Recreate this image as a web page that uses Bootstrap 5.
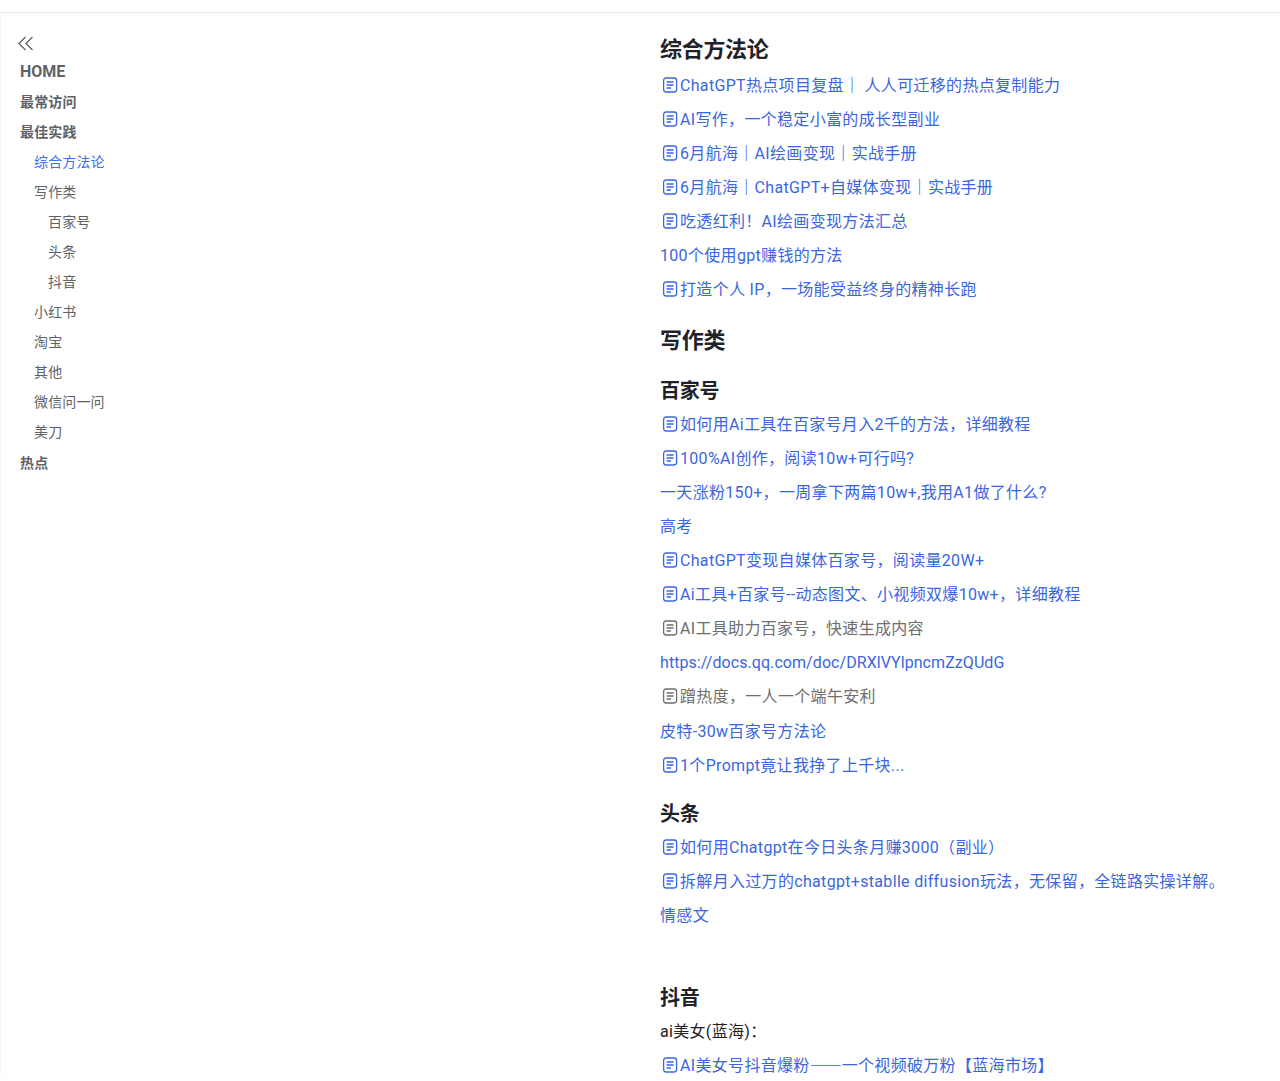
<!DOCTYPE html>
<html lang="zh-CN">

<head>
  <meta charset="UTF-8">
  <meta name="viewport" content="width=device-width, initial-scale=1.0">
  <title>最佳实践</title>
  <link href="https://cdn.jsdelivr.net/npm/bootstrap@5.3.0/dist/css/bootstrap.min.css" rel="stylesheet">
  <style>
    body {
      font-family: Roboto, "Noto Sans CJK SC", sans-serif;
      background-color: #fff;
      padding-top: 12px;
    }

    .page-shell {
      height: 1069px;
      overflow: hidden;
      border-top: 1px solid #e4e4e4;
      border-left: 1px solid #f4f4f4;
      border-bottom: 1px solid transparent;
      border-bottom-left-radius: 14px;
    }

    .side-wrap {
      width: 659px;
      padding: 19px 0 0 19px;
      color: #5f6368;
      font-size: 14px;
      line-height: 30px;
      letter-spacing: .15px;
    }

    .side-toggle {
      display: block;
      height: 23px;
      margin-left: -2px;
    }

    .side-item {
      height: 30px;
      white-space: nowrap;
    }

    .side-item.is-top {
      font-weight: 700;
    }

    .side-item.is-home {
      font-size: 16px;
      height: 32px;
      letter-spacing: 0;
      padding-top: 2px;
    }

    .side-item.is-last {
      margin-top: 1px;
    }

    .side-item.lvl-1 {
      padding-left: 14px;
    }

    .side-item.lvl-2 {
      padding-left: 28px;
    }

    .side-item.is-active {
      color: #3f6fe8;
    }

    .doc-wrap {
      padding-top: 20px;
      font-size: 16px;
      line-height: 34.1px;
      letter-spacing: .32px;
      white-space: nowrap;
    }

    .doc-title {
      font-size: 22px;
      line-height: 34px;
      font-weight: 700;
      color: #1f2329;
      margin: 0;
      letter-spacing: -.3px;
    }

    .doc-title.is-first {
      margin-bottom: 1.5px;
    }

    .doc-title.gap-big {
      margin-top: 16.5px;
    }

    .doc-title.gap-mid {
      margin-top: 16px;
      font-size: 20px;
    }

    .doc-title.gap-small {
      margin-top: 14px;
      font-size: 20px;
    }

    .doc-row {
      height: 34.1px;
      color: #3a66e0;
    }

    .doc-row.is-muted {
      color: #6e6e6e;
    }

    .doc-row.is-plain {
      color: #222;
    }

    .doc-row.is-url {
      letter-spacing: .07px;
    }

    .pipe-mark {
      font-weight: 700;
    }

    .dash-run {
      letter-spacing: 0;
      line-height: 0;
      font-family: "Noto Sans CJK SC", sans-serif;
    }

    .doc-icon {
      width: 20px;
      height: 16px;
      vertical-align: -2px;
      fill: none;
      stroke: currentColor;
      stroke-width: 1.3;
    }
  </style>
</head>

<body>
  <div class="page-shell d-flex">
    <div class="side-wrap flex-shrink-0">
      <svg class="side-toggle" width="16" height="16" viewBox="0 0 16 16" fill="none" stroke="#5f6368" stroke-width="1.3">
        <path d="M7.5 1.5 1 8l6.5 6.5M14.5 1.5 8 8l6.5 6.5" />
      </svg>
      <div class="side-item is-top is-home">HOME</div>
      <div class="side-item is-top">最常访问</div>
      <div class="side-item is-top">最佳实践</div>
      <div class="side-item lvl-1 is-active">综合方法论</div>
      <div class="side-item lvl-1">写作类</div>
      <div class="side-item lvl-2">百家号</div>
      <div class="side-item lvl-2">头条</div>
      <div class="side-item lvl-2">抖音</div>
      <div class="side-item lvl-1">小红书</div>
      <div class="side-item lvl-1">淘宝</div>
      <div class="side-item lvl-1">其他</div>
      <div class="side-item lvl-1">微信问一问</div>
      <div class="side-item lvl-1">美刀</div>
      <div class="side-item is-top is-last">热点</div>
    </div>

    <div class="doc-wrap flex-grow-1" id="doc"></div>
  </div>

  <script>
    // [text, has doc icon, style]
    const sections = [
      { title: '综合方法论', gap: 'is-first', rows: [
        ['ChatGPT热点项目复盘｜ 人人可迁移的热点复制能力', 1],
        ['AI写作，一个稳定小富的成长型副业', 1],
        ['6月航海｜AI绘画变现｜实战手册', 1],
        ['6月航海｜ChatGPT+自媒体变现｜实战手册', 1],
        ['吃透红利！AI绘画变现方法汇总', 1],
        ['100个使用gpt赚钱的方法', 0],
        ['打造个人 IP，一场能受益终身的精神长跑', 1]
      ] },
      { title: '写作类', gap: 'gap-big', rows: [] },
      { title: '百家号', gap: 'gap-mid', rows: [
        ['如何用Ai工具在百家号月入2千的方法，详细教程', 1],
        ['100%AI创作，阅读10w+可行吗?', 1],
        ['一天涨粉150+，一周拿下两篇10w+,我用A1做了什么?', 0],
        ['高考', 0],
        ['ChatGPT变现自媒体百家号，阅读量20W+', 1],
        ['Ai工具+百家号--动态图文、小视频双爆10w+，详细教程', 1],
        ['AI工具助力百家号，快速生成内容', 1, 'is-muted'],
        ['https://docs.qq.com/doc/DRXlVYlpncmZzQUdG', 0, 'is-url'],
        ['蹭热度，一人一个端午安利', 1, 'is-muted'],
        ['皮特-30w百家号方法论', 0],
        ['1个Prompt竟让我挣了上千块...', 1]
      ] },
      { title: '头条', gap: 'gap-small', rows: [
        ['如何用Chatgpt在今日头条月赚3000（副业）', 1],
        ['拆解月入过万的chatgpt+stablle diffusion玩法，无保留，全链路实操详解。', 1],
        ['情感文', 0],
        ['', 0]
      ] },
      { title: '抖音', gap: 'gap-small', rows: [
        ['ai美女(蓝海)：', 0, 'is-plain'],
        ['AI美女号抖音爆粉<span class="dash-run">——</span>一个视频破万粉【蓝海市场】', 1]
      ] }
    ];

    const docIcon = '<svg class="doc-icon" viewBox="0 0 20 16"><rect x="3.6" y="1" width="13" height="14" rx="2.4"/><path d="M6.6 5h7M6.6 8h7M6.6 11h4.4"/></svg>';

    function rowText(text) {
      return text.replace(/｜/g, '<span class="pipe-mark">｜</span>');
    }

    document.getElementById('doc').innerHTML = sections.map(section => `
      <h2 class="doc-title ${section.gap}">${section.title}</h2>
      ${section.rows.map(row => `<div class="doc-row ${row[2] || ''}">${row[1] ? docIcon : ''}${rowText(row[0])}</div>`).join('')}
    `).join('');
  </script>

  <script src="https://cdn.jsdelivr.net/npm/bootstrap@5.3.0/dist/js/bootstrap.bundle.min.js"></script>
</body>

</html>
